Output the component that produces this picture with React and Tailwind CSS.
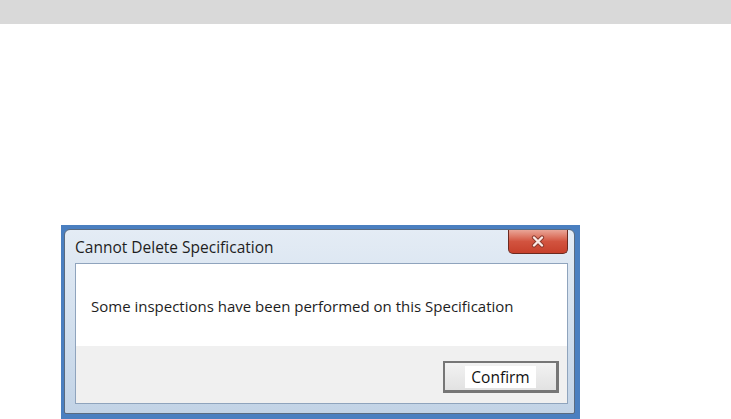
export default function App() {
  return (
    <div className="w-[731px] h-[419px] bg-white overflow-hidden" style={{ fontFamily: '"Open Sans", "Noto Sans", sans-serif' }}>
      <div className="h-[24px] bg-[#d9d9d9]" />
      <div className="ml-[61px] mt-[201px] w-[519px] h-[194px] bg-[#4a7fc0] pl-[3px] pt-[4px] pr-[5px] pb-[5px]">
        <div className="h-full w-full rounded-t-[6px] rounded-b-[2px] border border-[#5a6b80] bg-gradient-to-b from-[#e4ecf5] via-[#d3e0ee] to-[#c2d3e6] flex flex-col">
          <div className="h-[33px] flex items-start justify-between pl-[10px] pr-[6px] shrink-0">
            <div className="text-[15.5px] leading-[18px] text-[#1e1e1e] mt-[8px]">Cannot Delete Specification</div>
            <div className="w-[60px] h-[24px] rounded-b-[5px] border border-[#6b2a20] border-t-0 bg-gradient-to-b from-[#e9a597] via-[#d2533f] to-[#c7402b] flex items-center justify-center">
              <svg width="16" height="13" viewBox="0 0 16 13">
                <path d="M4 2.5 L12 10.5 M12 2.5 L4 10.5" stroke="#8a3a2e" strokeWidth="4.2" strokeLinecap="round" />
                <path d="M4 2.5 L12 10.5 M12 2.5 L4 10.5" stroke="#fbeae6" strokeWidth="2.4" strokeLinecap="round" />
              </svg>
            </div>
          </div>
          <div className="ml-[10px] mr-[6px] border border-[#8fa4bd] flex flex-col">
            <div className="h-[82px] bg-white flex items-center pl-[15px]">
              <div className="text-[15px] leading-[18px] text-[#1e1e1e] mt-[2px]">Some inspections have been performed on this Specification</div>
            </div>
            <div className="h-[57px] bg-[#f0f0f0] flex justify-end items-start pr-[8px] pt-[15px]">
              <div className="w-[116px] h-[32px] border-2 border-[#767676] border-b-[3px] border-r-[3px] bg-gradient-to-b from-[#f2f2f2] to-[#e2e2e2] flex items-center justify-center">
                <div className="bg-white px-[6px] text-[15.5px] leading-[22px] text-[#111]">Confirm</div>
              </div>
            </div>
          </div>
        </div>
      </div>
    </div>
  );
}
